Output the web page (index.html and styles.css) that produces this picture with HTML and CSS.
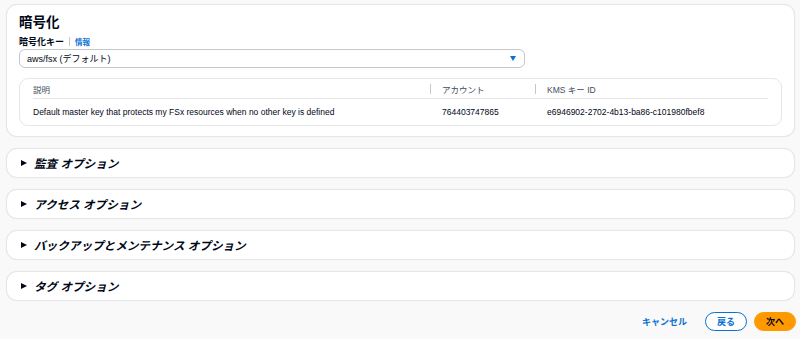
FILE: index.html
```html
<!DOCTYPE html>
<html lang="ja">
<head>
    <meta charset="UTF-8">
    <meta name="viewport" content="width=device-width, initial-scale=1.0">
    <title>暗号化</title>
    <link rel="stylesheet" href="styles.css">
</head>
<body>
    <div class="page">
        <div class="panel panel-main">
            <h2 class="panel-title">暗号化</h2>
            <div class="field-label">
                <span>暗号化キー</span>
                <span class="divider"></span>
                <a class="info-link">情報</a>
            </div>
            <div class="select">
                <span>aws/fsx (デフォルト)</span>
                <span class="select-arrow"></span>
            </div>
            <div class="key-table">
                <div class="key-row key-head">
                    <div class="cell">説明</div>
                    <div class="cell cell-sep">アカウント</div>
                    <div class="cell cell-sep">KMS キー ID</div>
                </div>
                <div class="key-row">
                    <div class="cell">Default master key that protects my FSx resources when no other key is defined</div>
                    <div class="cell cell-pad">764403747865</div>
                    <div class="cell cell-pad">e6946902-2702-4b13-ba86-c101980fbef8</div>
                </div>
            </div>
        </div>

        <div class="panel expander"><span class="caret"></span><span>監査 オプション</span></div>
        <div class="panel expander"><span class="caret"></span><span>アクセス オプション</span></div>
        <div class="panel expander"><span class="caret"></span><span>バックアップとメンテナンス オプション</span></div>
        <div class="panel expander"><span class="caret"></span><span>タグ オプション</span></div>

        <div class="actions">
            <a class="btn-link">キャンセル</a>
            <button class="btn btn-normal">戻る</button>
            <button class="btn btn-primary">次へ</button>
        </div>
    </div>
</body>
</html>
```

FILE: styles.css
```css
body {
    margin: 0;
    background: #f9f9f9;
    color: #000716;
    font-family: "Liberation Sans", "Noto Sans CJK JP", sans-serif;
    font-size: 8.5px;
}
.page {
    padding: 4px 5px 0 6px;
}
.panel {
    background: #ffffff;
    border: 1px solid #e4e6e8;
    border-radius: 11px;
    box-shadow: 0 0 1px rgba(0,0,0,0.08);
}
.panel-main {
    padding: 9px 12px 10px 12px;
}
.panel-title {
    margin: 0;
    font-size: 13.5px;
    line-height: 17px;
    font-weight: bold;
}
.field-label {
    display: flex;
    align-items: center;
    margin-top: 3px;
    height: 14px;
    font-weight: bold;
    font-size: 9px;
}
.divider {
    width: 1px;
    height: 9px;
    background: #c6c6cd;
    margin: 0 5px 0 5px;
}
.info-link {
    color: #0972d3;
    font-size: 7.5px;
}
.select {
    display: flex;
    align-items: center;
    justify-content: space-between;
    width: 506px;
    height: 19px;
    margin-top: 1px;
    box-sizing: border-box;
    padding: 0 8px 0 7px;
    border: 1px solid #c6c6cd;
    border-radius: 6px;
    font-size: 9px;
}
.select-arrow {
    width: 0;
    height: 0;
    border-left: 3.5px solid transparent;
    border-right: 3.5px solid transparent;
    border-top: 5px solid #0972d3;
}
.key-table {
    margin-top: 10px;
    padding: 0 13px;
    border: 1px solid #e4e6e8;
    border-radius: 9px;
}
.key-row {
    display: grid;
    grid-template-columns: 397px 105px 1fr;
    align-items: center;
    height: 26px;
}
.key-head {
    height: 19px;
    color: #414d5c;
    border-bottom: 1px solid #e4e6e8;
}
.cell {
    white-space: nowrap;
}
.cell-sep {
    display: flex;
    align-items: center;
}
.cell-sep::before {
    content: "";
    width: 1px;
    height: 10px;
    background: #c6c6cd;
    margin-right: 11px;
}
.cell-pad {
    padding-left: 12px;
}
.expander {
    display: flex;
    align-items: center;
    gap: 7px;
    height: 30px;
    box-sizing: border-box;
    margin-top: 11px;
    padding: 0 13px 0 14px;
    font-size: 11.6px;
    font-weight: bold;
    font-style: italic;
}
.caret {
    width: 0;
    height: 0;
    border-top: 3.5px solid transparent;
    border-bottom: 3.5px solid transparent;
    border-left: 6.5px solid #000716;
}
.actions {
    display: flex;
    justify-content: flex-end;
    align-items: center;
    gap: 7px;
    margin-top: 11px;
    margin-right: -1px;
}
.btn-link {
    color: #0972d3;
    font-weight: bold;
    font-size: 9px;
    margin-right: 11px;
}
.btn {
    height: 19px;
    padding: 0 11px;
    border-radius: 10px;
    font-family: inherit;
    font-size: 9px;
    font-weight: bold;
    cursor: pointer;
}
.btn-normal {
    background: #ffffff;
    color: #0972d3;
    border: 1.5px solid #0972d3;
}
.btn-primary {
    background: #ff9900;
    color: #000716;
    border: 1.5px solid #ff9900;
}
```
